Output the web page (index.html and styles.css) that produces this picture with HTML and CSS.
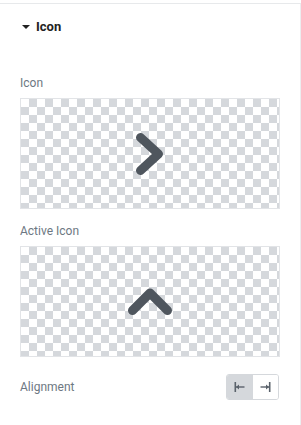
FILE: index.html
```html
<!DOCTYPE html>
<html>
<head>
<meta charset="utf-8">
<link rel="stylesheet" href="styles.css">
</head>
<body>
<div class="panel">
  <div class="section-head">
    <span class="caret"></span>
    <span class="section-title">Icon</span>
  </div>
  <div class="field">
    <div class="label">Icon</div>
    <div class="media">
      <svg class="chev" viewBox="0 0 30 44" width="30" height="44"><polyline points="5.5,5.5 23.5,22 5.5,38.5"/></svg>
    </div>
  </div>
  <div class="field second">
    <div class="label">Active Icon</div>
    <div class="media">
      <svg class="chev" viewBox="0 0 46 29" width="46" height="29"><polyline points="5.5,23.5 23,6 40.5,23.5"/></svg>
    </div>
  </div>
  <div class="row">
    <div class="label">Alignment</div>
    <div class="btn-group">
      <div class="btn active">
        <svg viewBox="0 0 11 10" width="11" height="10"><rect x="0.5" y="0" width="1.6" height="10"/><rect x="2" y="4.3" width="8.5" height="1.4"/><path d="M2 5 L5 2.6 L5 7.4 Z"/></svg>
      </div>
      <div class="btn">
        <svg viewBox="0 0 11 10" width="11" height="10"><rect x="8.9" y="0" width="1.6" height="10"/><rect x="0.5" y="4.3" width="8.5" height="1.4"/><path d="M9 5 L6 2.6 L6 7.4 Z"/></svg>
      </div>
    </div>
  </div>
</div>
</body>
</html>
```
FILE: styles.css
```css
html, body {
  margin: 0;
  padding: 0;
  background: #fff;
}
body {
  font-family: Roboto, "Liberation Sans", sans-serif;
  width: 301px;
  height: 425px;
  overflow: hidden;
}
.panel {
  margin-top: 3px;
  width: 301px;
  height: 422px;
  border-top: 1px solid #e7e9eb;
  border-right: 1px solid #eceef0;
  box-sizing: border-box;
}
.section-head {
  display: flex;
  align-items: center;
  height: 45px;
  padding-left: 22px;
}
.caret {
  width: 0;
  height: 0;
  border-left: 4px solid transparent;
  border-right: 4px solid transparent;
  border-top: 4px solid #222;
  margin-right: 6px;
}
.section-title {
  font-size: 13px;
  font-weight: 700;
  color: #222;
}
.field {
  padding: 0 20px;
  margin-top: 27px;
}
.field.second {
  margin-top: 15px;
}
.label {
  font-size: 12px;
  line-height: 15px;
  color: #6d7882;
}
.media {
  margin-top: 7px;
  height: 111px;
  width: 260px;
  box-sizing: border-box;
  border: 1px solid #e2e4e7;
  background: repeating-conic-gradient(#d5d8dc 0 25%, #fff 0 50%) 0 0 / 16px 16px;
  display: flex;
  align-items: center;
  justify-content: center;
}
.chev polyline {
  fill: none;
  stroke: #4f565e;
  stroke-width: 9;
  stroke-linecap: round;
  stroke-linejoin: round;
}
.row {
  display: flex;
  align-items: center;
  justify-content: space-between;
  padding: 0 21px 0 20px;
  margin-top: 17px;
}
.btn-group {
  display: flex;
  border: 1px solid #d5d8dc;
  border-radius: 3px;
  overflow: hidden;
  height: 26px;
  box-sizing: border-box;
}
.btn {
  width: 25px;
  display: flex;
  align-items: center;
  justify-content: center;
  background: #fff;
}
.btn + .btn {
  border-left: 1px solid #d5d8dc;
}
.btn.active {
  background: #d5d8dc;
}
.btn svg {
  fill: #5a626b;
}
```
